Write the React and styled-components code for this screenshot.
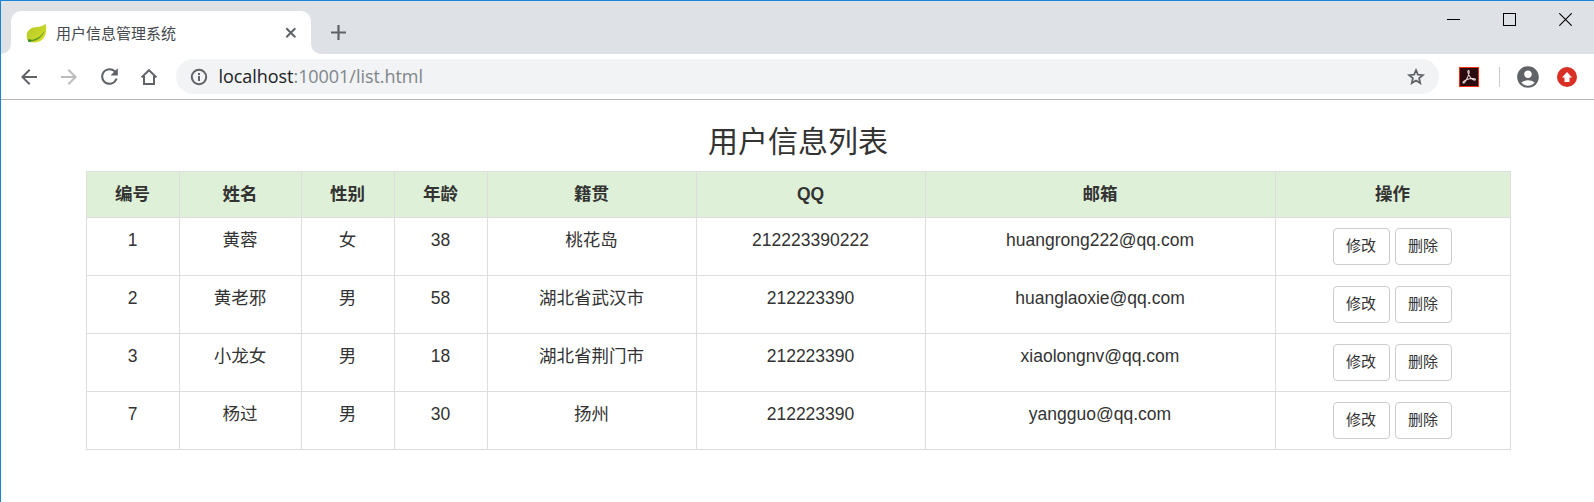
import React from "react";
import styled, { createGlobalStyle } from "styled-components";
import {
  MdArrowBack,
  MdArrowForward,
  MdRefresh,
  MdAccountCircle,
} from "react-icons/md";

const GlobalStyle = createGlobalStyle`
  * { box-sizing: border-box; }
  html, body { margin: 0; background: #fff; }
  body { overflow: hidden; }
`;

const Window = styled.div`
  width: 1594px;
  height: 502px;
  border-top: 1px solid #1883d7;
  border-left: 1px solid #1883d7;
  background: #fff;
  color: #333;
  font-family: "Liberation Sans", "Noto Sans CJK SC", sans-serif;
`;

const TitleBar = styled.div`
  display: flex;
  height: 53px;
  background: #dee1e6;
`;

const TabCorner = styled.div`
  width: 10px;
  background: #fff;
  &::before {
    content: "";
    display: block;
    height: 53px;
    background: #dee1e6;
    border-radius: ${(p) => (p.$side === "left" ? "0 0 10px 0" : "0 0 0 10px")};
  }
`;

const Tab = styled.div`
  display: flex;
  align-items: center;
  width: 300px;
  height: 43px;
  margin-top: 10px;
  padding: 0 11px 0 15px;
  border-radius: 10px 10px 0 0;
  background: #fff;
`;

const TabTitle = styled.span`
  flex: 1;
  margin-left: 9px;
  padding-top: 2px;
  font-size: 15px;
  line-height: 20px;
  color: #45494d;
`;

const IconBox = styled.span`
  display: flex;
  align-items: center;
  justify-content: center;
  flex: none;
  width: ${(p) => p.$w}px;
  height: ${(p) => p.$h || p.$w}px;
  color: ${(p) => p.$color || "#5f6368"};
`;

const NewTab = styled(IconBox)`
  margin: 19px 0 0 5px;
`;

const WindowControls = styled.div`
  display: flex;
  margin-left: auto;
  height: 37px;
`;

const Toolbar = styled.div`
  display: flex;
  align-items: center;
  height: 46px;
  padding-left: 8px;
  border-bottom: 1px solid #b3b4b6;
`;

const AddressBar = styled.div`
  display: flex;
  flex: none;
  align-items: center;
  width: 1263px;
  height: 35px;
  margin-left: 7px;
  padding: 0 12px 0 13px;
  border-radius: 18px;
  background: #f1f3f4;
`;

const Url = styled.span`
  flex: 1;
  margin-left: 9.5px;
  padding-bottom: 2px;
  font-family: "Open Sans", sans-serif;
  font-size: 18px;
  line-height: 24px;
  letter-spacing: -0.05px;
  color: #80868b;
  b { font-weight: 400; color: #202124; }
`;

const Divider = styled.span`
  width: 1px;
  height: 20px;
  margin-right: 15px;
  background: #c9cccf;
`;

const Page = styled.main`
  width: 1425px;
  margin-left: 85px;
  padding-top: 25px;
`;

const Title = styled.h3`
  margin: 0 0 12.5px;
  padding-right: 1px;
  height: 33.5px;
  font-size: 30px;
  line-height: 33px;
  font-weight: 400;
  text-align: center;
`;

const Table = styled.table`
  width: 1425px;
  table-layout: fixed;
  border-collapse: separate;
  border-spacing: 0;
  border: solid #ddd;
  border-width: 1px 0 0 1px;
  font-size: 17.5px;
  line-height: 25px;
  text-align: center;
`;

const Col = styled.col`
  width: ${(p) => p.$w}px;
`;

const HeadCell = styled.th`
  height: 46px;
  padding: 10px 10px 10px 9px;
  border: solid #ddd;
  border-width: 0 1px 1px 0;
  background: #dff0d8;
  font-weight: 700;
`;

const Cell = styled.td`
  height: 58px;
  padding: 10px 10px 10px 9px;
  border: solid #ddd;
  border-width: 0 1px 1px 0;
  vertical-align: top;
`;

const Actions = styled.div`
  display: flex;
  justify-content: center;
  gap: 5px;
  padding-right: 1px;
`;

const Button = styled.button`
  width: 57px;
  height: 37px;
  padding: 0 0 2px;
  border: 1px solid #ccc;
  border-radius: 4px;
  background: #fff;
  color: #333;
  font: 15px/22px "Liberation Sans", "Noto Sans CJK SC", sans-serif;
`;

const LeafIcon = () => (
  <svg width="21" height="20" viewBox="0 0 21 20">
    <defs>
      <linearGradient id="leaf" x1="0" y1="0" x2="1" y2="1">
        <stop offset="0" stopColor="#b2c51e" />
        <stop offset="0.55" stopColor="#c5d42b" />
        <stop offset="1" stopColor="#e0e51f" />
      </linearGradient>
    </defs>
    <path d="M19.5 0.5C17 4 12 3.4 7.500 4.600C2.500 6 0.500 9.500 0.700 13.500C0.800 16 1.500 18 2.500 18.500C7 20 13 19.800 16.500 16.500C20.500 12.500 20.800 6 19.500 0.500Z" fill="url(#leaf)" />
    <path d="M2 17.400C8 17.200 14.500 14.500 18.800 7.500C16.800 13.600 12 17.400 5.500 18.600C3.500 19 2.500 18.600 2 17.400Z" fill="#5d9a25" />
    <path d="M2.300 16.200L5.400 16.600L4.200 19.200L2.200 18.600Z" fill="#38862c" />
  </svg>
);

const TabCloseIcon = () => (
  <svg width="12" height="12" viewBox="0 0 12 12" stroke="currentColor" strokeWidth="2">
    <path d="M1.300 1.300L10.300 10.300M10.300 1.300L1.300 10.300" />
  </svg>
);

const PlusIcon = () => (
  <svg width="15" height="15" viewBox="0 0 15 15" stroke="currentColor" strokeWidth="2.200">
    <path d="M0 7.500H15M7.500 0V15" />
  </svg>
);

const InfoIcon = () => (
  <svg width="18" height="18" viewBox="0 0 18 18" fill="none" stroke="currentColor" strokeWidth="2">
    <circle cx="9" cy="9" r="7.200" />
    <path d="M9 8V13M9 5V7" />
  </svg>
);

const StarIcon = () => (
  <svg width="20" height="20" viewBox="0 0 20 20" fill="none" stroke="currentColor" strokeWidth="1.800">
    <path d="M10 3.200L11.900 7.700L16.800 8.100L13.100 11.300L14.200 16.100L10 13.500L5.800 16.100L6.900 11.300L3.200 8.100L8.100 7.700Z" />
  </svg>
);

const HomeIcon = () => (
  <svg width="18" height="18" viewBox="0 0 18 18" fill="none" stroke="currentColor" strokeWidth="2">
    <path d="M1.600 9.400L9 2.200L16.400 9.400" />
    <path d="M4 7.800V16H14V7.800" />
  </svg>
);

const AcrobatIcon = () => (
  <svg width="20" height="20" viewBox="0 0 20 20">
    <rect x="0.5" y="0.5" width="19" height="19" fill="#2b0b0e" stroke="#fa2b0c" />
    <path
      d="M9.300 3.500C7.900 4.200 9.500 8 12 11.200C13.700 13 16.400 13.800 16.500 12.500C16.500 11 11.500 11.300 8 12.500C5.200 13.500 3.300 15.300 4.200 16C5.700 16.800 9.300 9.800 10.100 6C10.400 4.300 10 3.300 9.300 3.500Z"
      fill="none" stroke="#e4d8d8" strokeWidth="1.050" />
  </svg>
);

const UpdateIcon = () => (
  <svg width="20" height="20" viewBox="0 0 20 20">
    <circle cx="10" cy="10" r="10" fill="#d93025" />
    <path d="M10 5L15 10.500H12.500V15H7.500V10.500H5Z" fill="#fff" />
  </svg>
);

const MinimizeIcon = () => (
  <svg width="13" height="13" viewBox="0 0 13 13" stroke="#000">
    <path d="M0 6.500H13" />
  </svg>
);

const MaximizeIcon = () => (
  <svg width="13" height="13" viewBox="0 0 13 13" fill="none" stroke="#000">
    <rect x="0.500" y="0.500" width="12" height="12" />
  </svg>
);

const CloseIcon = () => (
  <svg width="13" height="13" viewBox="0 0 13 13" stroke="#000" strokeWidth="1.100">
    <path d="M0.300 0.300L12.700 12.700M12.700 0.300L0.300 12.700" />
  </svg>
);

const columns = [
  ["编号", 93],
  ["姓名", 122],
  ["性别", 93],
  ["年龄", 93],
  ["籍贯", 209],
  ["QQ", 229],
  ["邮箱", 350],
  ["操作", 235],
];

const users = [
  ["1", "黄蓉", "女", "38", "桃花岛", "212223390222", "huangrong222@qq.com"],
  ["2", "黄老邪", "男", "58", "湖北省武汉市", "212223390", "huanglaoxie@qq.com"],
  ["3", "小龙女", "男", "18", "湖北省荆门市", "212223390", "xiaolongnv@qq.com"],
  ["7", "杨过", "男", "30", "扬州", "212223390", "yangguo@qq.com"],
];

export default function App() {
  return (
    <Window>
      <GlobalStyle />
      <TitleBar>
        <TabCorner $side="left" />
        <Tab>
          <LeafIcon />
          <TabTitle>用户信息管理系统</TabTitle>
          <IconBox $w={18}><TabCloseIcon /></IconBox>
        </Tab>
        <TabCorner $side="right" />
        <NewTab $w={25}><PlusIcon /></NewTab>
        <WindowControls>
          <IconBox $w={57} $h={37} $color="#000"><MinimizeIcon /></IconBox>
          <IconBox $w={55} $h={37} $color="#000"><MaximizeIcon /></IconBox>
          <IconBox $w={57} $h={37} $color="#000"><CloseIcon /></IconBox>
        </WindowControls>
      </TitleBar>
      <Toolbar>
        <IconBox $w={40}><MdArrowBack size={24} /></IconBox>
        <IconBox $w={40} $color="#babcbe"><MdArrowForward size={24} /></IconBox>
        <IconBox $w={40}><MdRefresh size={25} /></IconBox>
        <IconBox $w={40}><HomeIcon /></IconBox>
        <AddressBar>
          <IconBox $w={20}><InfoIcon /></IconBox>
          <Url><b>localhost</b>:10001/list.html</Url>
          <IconBox $w={22}><StarIcon /></IconBox>
        </AddressBar>
        <IconBox $w={60} $h={20}><AcrobatIcon /></IconBox>
        <Divider />
        <IconBox $w={26}><MdAccountCircle size={26} /></IconBox>
        <IconBox $w={52} $h={20}><UpdateIcon /></IconBox>
      </Toolbar>
      <Page>
        <Title>用户信息列表</Title>
        <Table>
          <colgroup>
            {columns.map(([name, w]) => <Col key={name} $w={w} />)}
          </colgroup>
          <thead>
            <tr>{columns.map(([name]) => <HeadCell key={name}>{name}</HeadCell>)}</tr>
          </thead>
          <tbody>
            {users.map((user) => (
              <tr key={user[0]}>
                {user.map((value, i) => <Cell key={i}>{value}</Cell>)}
                <Cell>
                  <Actions>
                    <Button>修改</Button>
                    <Button>删除</Button>
                  </Actions>
                </Cell>
              </tr>
            ))}
          </tbody>
        </Table>
      </Page>
    </Window>
  );
}
